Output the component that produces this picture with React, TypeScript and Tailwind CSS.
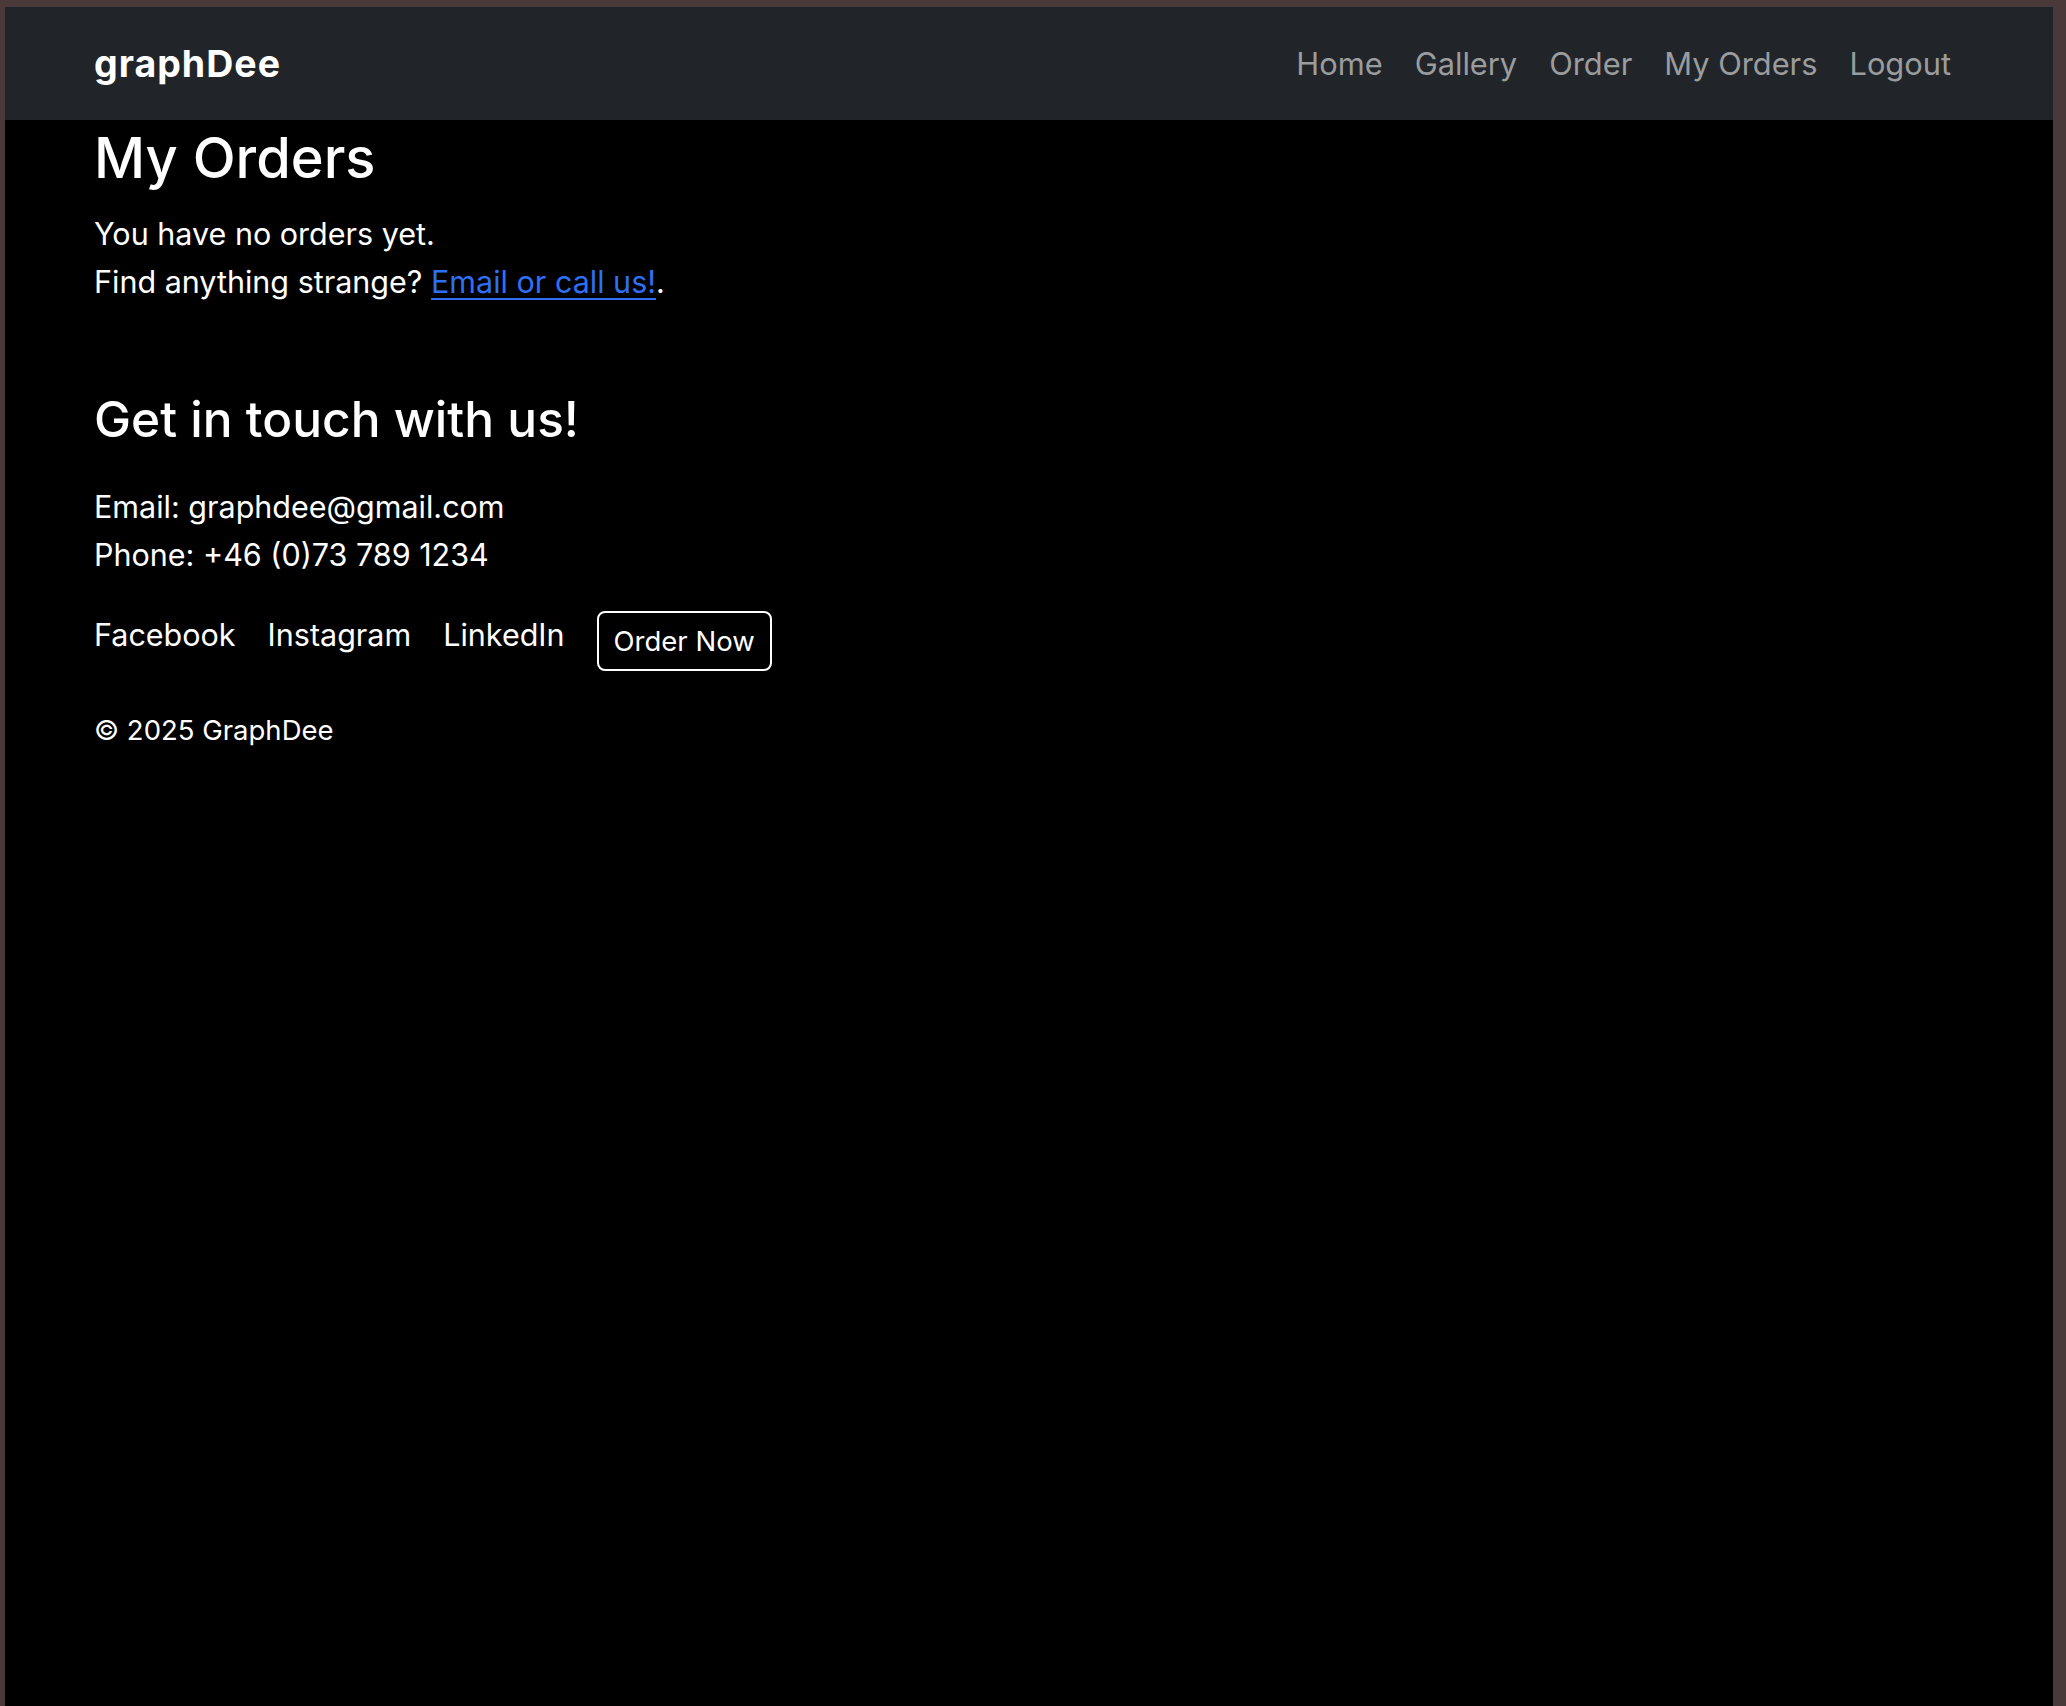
import React from "react";

export default function App() {
  const font = { fontFamily: "Inter, 'Noto Sans', sans-serif" };
  return (
    <div className="min-h-screen bg-[#4a3939] pt-[7px] pl-[5px] pr-[13px]" style={font}>
      <div className="bg-black min-h-[1699px] text-white">
        <nav className="h-[113px] bg-[#212529] flex items-center justify-between pl-[89px] pr-[86px]">
          <a className="text-[37.5px] font-bold tracking-[1px] text-white leading-none">graphDee</a>
          <div className="flex items-center text-[30.8px] text-[#9a9c9e] leading-none pt-[2px]">
            <a className="px-[16px]">Home</a>
            <a className="px-[16px]">Gallery</a>
            <a className="px-[16px]">Order</a>
            <a className="px-[16px]">My Orders</a>
            <a className="px-[16px]">Logout</a>
          </div>
        </nav>
        <main className="pl-[89px]">
          <h2 className="text-[56px] font-medium leading-[77px] mb-[13px]">My Orders</h2>
          <p className="text-[30.5px] leading-[48px]">You have no orders yet.</p>
          <p className="text-[30.5px] leading-[48px]">
            Find anything strange?{" "}
            <a className="text-[#2f6ff5] underline underline-offset-[5px] decoration-[2px]">Email or call us!</a>.
          </p>
          <footer className="pt-[80px]">
            <h3 className="text-[49.6px] font-medium leading-[67px] mb-[30px]">Get in touch with us!</h3>
            <p className="text-[30.5px] leading-[48px]">Email: graphdee@gmail.com</p>
            <p className="text-[30.5px] leading-[48px]">Phone: +46 (0)73 789 1234</p>
            <div className="flex items-start gap-[32px] mt-[32px] text-[30.5px] leading-[48px]">
              <a>Facebook</a>
              <a>Instagram</a>
              <a>LinkedIn</a>
              <button className="border-2 border-white rounded-[8px] h-[60px] px-[15px] text-[27.5px] leading-[42px]">
                Order Now
              </button>
            </div>
            <p className="mt-[38px] text-[27.5px] leading-[42px]">© 2025 GraphDee</p>
          </footer>
        </main>
      </div>
    </div>
  );
}
